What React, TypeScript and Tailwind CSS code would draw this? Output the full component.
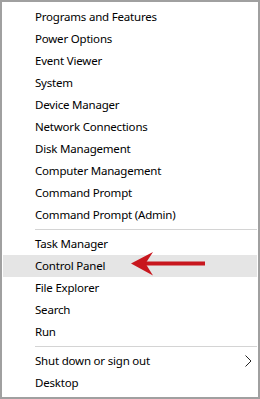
import React from "react";

const groupA = [
  "Programs and Features",
  "Power Options",
  "Event Viewer",
  "System",
  "Device Manager",
  "Network Connections",
  "Disk Management",
  "Computer Management",
  "Command Prompt",
  "Command Prompt (Admin)",
];
const groupB = ["Task Manager", "Control Panel", "File Explorer", "Search", "Run"];

function Row({ label, active, chevron }: { label: string; active?: boolean; chevron?: boolean }) {
  return (
    <div
      className={
        "relative h-[22px] mx-[1px] flex items-center pl-[32px] text-[11.5px] tracking-[-0.2px] leading-none text-black " +
        (active ? "bg-[#e5e5e5]" : "")
      }
    >
      <span>{label}</span>
      {chevron && (
        <svg className="absolute left-[238px] top-[4px]" width="12" height="14" viewBox="0 0 12 14">
          <path d="M4.5 1.5 L10 7 L4.5 12.5" fill="none" stroke="#222" strokeWidth="1" />
        </svg>
      )}
    </div>
  );
}

function Sep() {
  return (
    <div className="h-[7px] flex items-center pl-[33px] pr-[1px]">
      <div className="h-px w-full bg-[#d4d4d4]" />
    </div>
  );
}

export default function App() {
  return (
    <div
      className="relative w-[260px] h-[399px] bg-white border-2 border-[#a0a0a0] pt-[4px] pb-[3px]"
      style={{ fontFamily: '"Segoe UI", "Noto Sans", sans-serif' }}
    >
      {groupA.map((l) => (
        <Row key={l} label={l} />
      ))}
      <Sep />
      {groupB.map((l) => (
        <Row key={l} label={l} active={l === "Control Panel"} />
      ))}
      <Sep />
      <Row label="Shut down or sign out" chevron />
      <Row label="Desktop" />
      <svg
        className="absolute -left-[2px] -top-[2px]"
        width="260"
        height="399"
        viewBox="0 0 260 399"
        style={{ pointerEvents: "none" }}
      >
        <rect x="145" y="261.5" width="60" height="4" fill="#c8171e" />
        <path d="M131 263.5 L153 252 L145.5 263.5 L153 275.5 Z" fill="#c8171e" />
      </svg>
    </div>
  );
}
